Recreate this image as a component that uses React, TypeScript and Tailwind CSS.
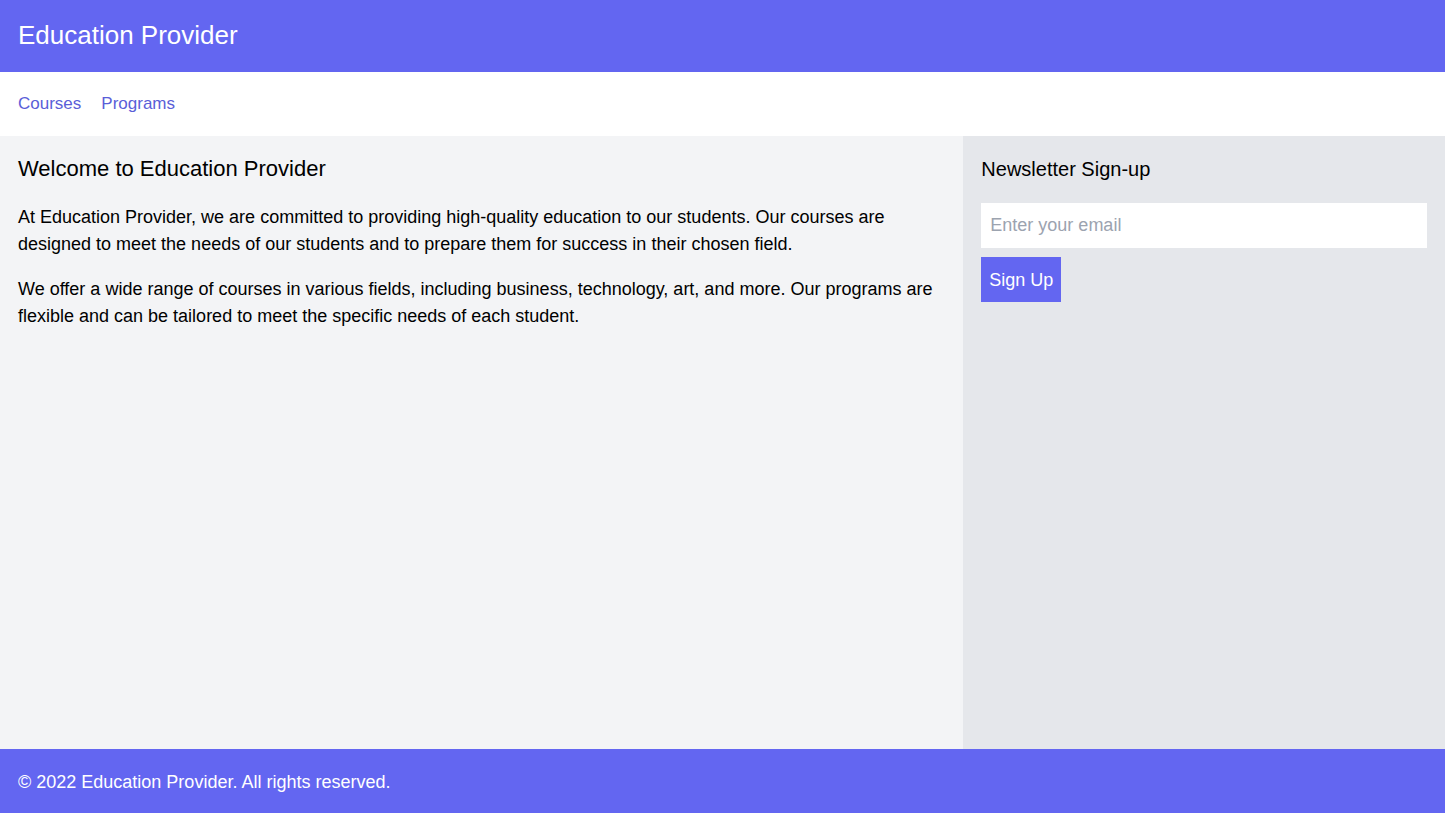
import React from "react";

const App: React.FC = () => {
    return (
        <div className="min-h-screen flex flex-col font-['Liberation_Sans',sans-serif] text-black">
            <header className="bg-[#6366f1] px-[18px] pt-[19px] pb-[21px]">
                <h1 className="text-[26px] leading-[32px] text-white">Education Provider</h1>
            </header>

            <nav className="bg-white px-[18px] py-5">
                <ul className="flex gap-5 text-[17px] leading-6">
                    <li><a href="#" className="text-[#5a5ed8]">Courses</a></li>
                    <li><a href="#" className="text-[#5a5ed8]">Programs</a></li>
                </ul>
            </nav>

            <main className="flex flex-1">
                <section className="w-2/3 bg-[#f3f4f6] px-[18px] pt-[19px] pb-[18px]">
                    <h2 className="text-[22px] leading-7 mb-[21px]">Welcome to Education Provider</h2>
                    <p className="text-lg leading-[27px] mb-[18px]">
                        At Education Provider, we are committed to providing high-quality education to our students. Our courses are designed to meet the needs of our students and to prepare them for success in their chosen field.
                    </p>
                    <p className="text-lg leading-[27px]">
                        We offer a wide range of courses in various fields, including business, technology, art, and more. Our programs are flexible and can be tailored to meet the specific needs of each student.
                    </p>
                </section>

                <aside className="w-1/3 bg-[#e5e7eb] px-[18px] pt-[19px] pb-[18px]">
                    <h2 className="text-xl leading-7 mb-5">Newsletter Sign-up</h2>
                    <form className="flex flex-col items-start">
                        <input
                            type="email"
                            placeholder="Enter your email"
                            className="w-full h-[45px] bg-white px-[9px] text-lg placeholder:text-[#9ca3af] outline-none"
                        />
                        <button type="button" className="mt-[9px] h-[45px] bg-[#6366f1] text-white text-lg px-2">
                            Sign Up
                        </button>
                    </form>
                </aside>
            </main>

            <footer className="bg-[#6366f1] h-[64px] px-[18px] pt-[19px]">
                <p className="text-lg leading-7 text-white">© 2022 Education Provider. All rights reserved.</p>
            </footer>
        </div>
    );
};

export default App;
